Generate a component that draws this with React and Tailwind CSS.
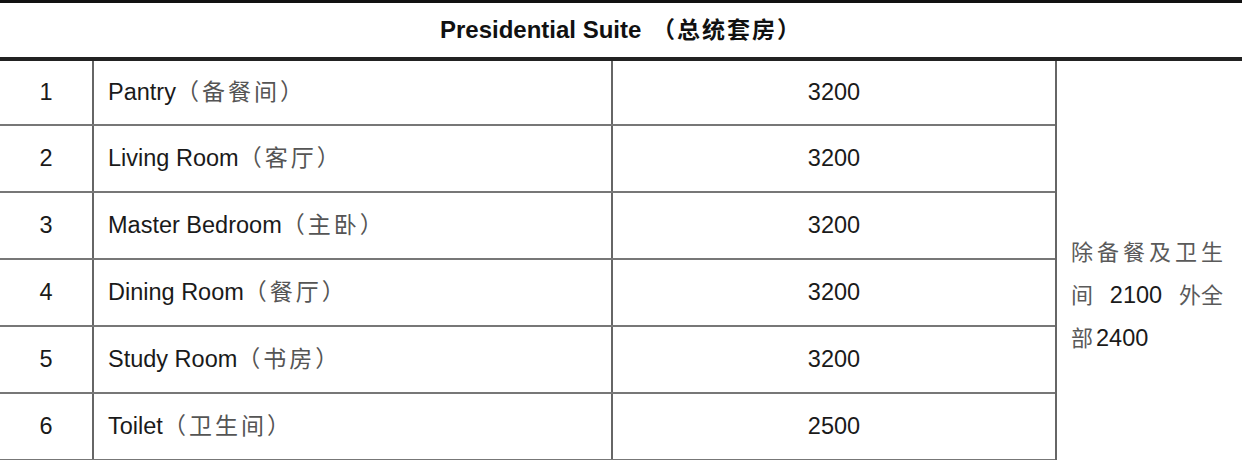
import React from 'react';

const rows = [
  { no: 1, en: 'Pantry', cn: '（备餐间）', price: '3200' },
  { no: 2, en: 'Living Room', cn: '（客厅）', price: '3200' },
  { no: 3, en: 'Master Bedroom', cn: '（主卧）', price: '3200' },
  { no: 4, en: 'Dining Room', cn: '（餐厅）', price: '3200' },
  { no: 5, en: 'Study Room', cn: '（书房）', price: '3200' },
  { no: 6, en: 'Toilet', cn: '（卫生间）', price: '2500' },
];

export default function App() {
  return (
    <div className="w-[1244px] h-[460px] overflow-hidden bg-white text-[#1a1a1a] text-[23.5px]" style={{ fontFamily: '"Liberation Sans", Arial, "Noto Sans CJK SC", sans-serif' }}>
      <div className="w-[1242px]">
        {/* header */}
        <div className="h-[61px] border-t-[3px] border-b-[4px] border-t-[#111] border-b-[#222] flex items-center justify-center font-bold text-[#111] text-[24px]">
          <span>Presidential Suite <span className="ml-[4px] text-[23px] tracking-[2px]">（总统套房）</span></span>
        </div>

        <div className="flex">
          <div className="w-[1055px]">
            {rows.map((r, i) => (
              <div key={r.no} className={`flex border-b-2 border-[#777] ${i === 0 ? 'h-[65px]' : 'h-[67px]'}`}>
                <div className="w-[92px] flex items-center justify-center">{r.no}</div>
                <div className="w-[519px] border-l-2 border-[#666] flex items-center pl-[14px]">
                  {r.en}
                  <span className="text-[#555] text-[23px] tracking-[3px]">{r.cn}</span>
                </div>
                <div className="w-[444px] border-l-2 border-[#666] flex items-center justify-center">{r.price}</div>
              </div>
            ))}
          </div>
          <div className="w-[187px] border-l-2 border-[#666] pt-[170px] pl-[14px]">
            <div className="w-[152px] text-[22px] leading-[43px] text-[#5a5a5a]">
              <div className="flex justify-between">
                <span>除</span><span>备</span><span>餐</span><span>及</span><span>卫</span><span>生</span>
              </div>
              <div className="flex justify-between">
                <span>间</span><span className="text-[#1a1a1a] text-[23.5px]">2100</span><span>外全</span>
              </div>
              <div className="flex">
                <span>部</span><span className="text-[#1a1a1a] text-[23.5px] ml-[3px]">2400</span>
              </div>
            </div>
          </div>
        </div>
      </div>
    </div>
  );
}
